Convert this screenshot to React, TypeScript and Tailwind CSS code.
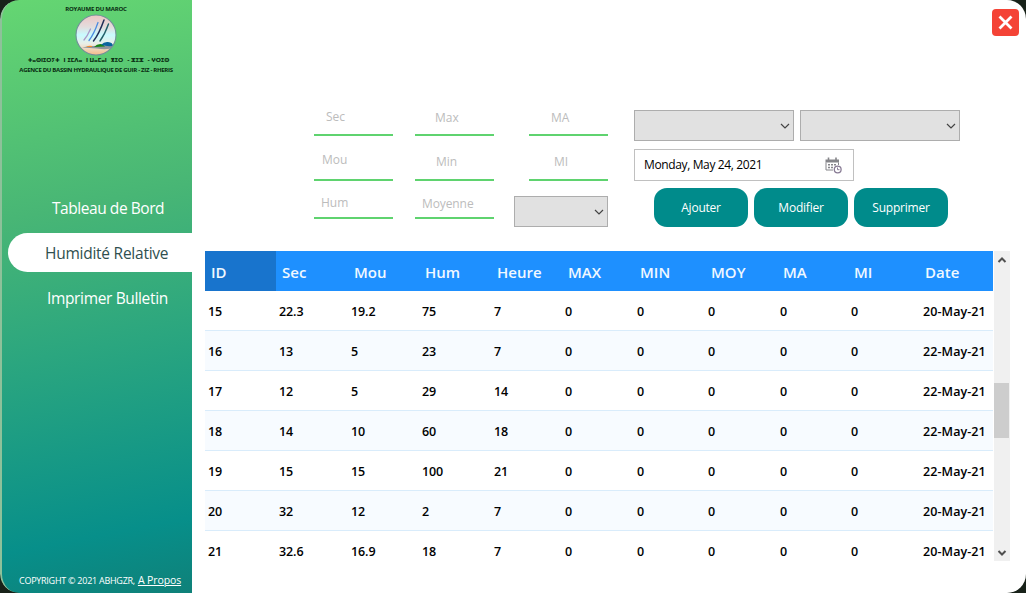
import { ReactNode } from "react";

const columns = ["ID", "Sec", "Mou", "Hum", "Heure", "MAX", "MIN", "MOY", "MA", "MI", "Date"];

const rows = [
  ["15", "22.3", "19.2", "75", "7", "0", "0", "0", "0", "0", "20-May-21"],
  ["16", "13", "5", "23", "7", "0", "0", "0", "0", "0", "22-May-21"],
  ["17", "12", "5", "29", "14", "0", "0", "0", "0", "0", "22-May-21"],
  ["18", "14", "10", "60", "18", "0", "0", "0", "0", "0", "22-May-21"],
  ["19", "15", "15", "100", "21", "0", "0", "0", "0", "0", "22-May-21"],
  ["20", "32", "12", "2", "7", "0", "0", "0", "0", "0", "20-May-21"],
  ["21", "32.6", "16.9", "18", "7", "0", "0", "0", "0", "0", "20-May-21"],
];

const tableGrid = "grid grid-cols-[71px_72px_71px_72px_71px_72px_71px_72px_71px_72px_75px]";

function Logo() {
  return (
    <svg width="42" height="42" viewBox="0 0 42 42" className="block">
      <defs>
        <linearGradient id="sky" x1="0" y1="0" x2="0" y2="1">
          <stop offset="0" stopColor="#edc5c4" />
          <stop offset="0.3" stopColor="#e3dddd" />
          <stop offset="0.5" stopColor="#c9fbff" />
          <stop offset="0.72" stopColor="#e9eee6" />
          <stop offset="1" stopColor="#f6b988" />
        </linearGradient>
        <clipPath id="disc"><circle cx="21" cy="21" r="20" /></clipPath>
      </defs>
      <circle cx="21" cy="21" r="20" fill="url(#sky)" />
      <g clipPath="url(#disc)">
        <path d="M7 33.500 Q14 31.500 20 32 L38 31 L39 33.500 Q32 36.500 22 34.500 Z" fill="#8d949a" />
        <path d="M11 33 Q14 31 17 32 L17 33 Z" fill="#f28d2f" />
        <path d="M19 33 Q23 29 28 30.500 L30 32.500 Z" fill="#148513" />
        <path d="M26 31 Q29 27.500 33 28 Q38 28.500 38 32 Q31 32.500 26 31 Z" fill="#09649d" />
      </g>
      <g fill="none" strokeLinecap="round">
        <path d="M15.500 15 Q12.500 22 9 26" stroke="#a99ac8" strokeWidth="1.3" />
        <path d="M23 8.500 Q19 20 14 26.500" stroke="#4d8be0" strokeWidth="1.3" />
        <path d="M29 6 Q24 20 18.500 27" stroke="#202e57" strokeWidth="1.5" />
        <path d="M33.500 10 Q30 20 25 27" stroke="#23616b" strokeWidth="1.400" />
      </g>
      <circle cx="21" cy="21" r="20" fill="none" stroke="#71909a" strokeWidth="1.1" />
    </svg>
  );
}

function Chevron({ up = false, bold = false }: { up?: boolean; bold?: boolean }) {
  return (
    <svg width="10" height="8" viewBox="0 0 10 8" className="block shrink-0">
      <path
        d={up ? "M1.500 6 L5 2.500 L8.500 6" : bold ? "M1.500 2 L5 5.500 L8.500 2" : "M1 2 L5 6 L9 2"}
        fill="none"
        stroke={bold ? "#505050" : "#444"}
        strokeWidth={bold ? 2 : 1.2}
      />
    </svg>
  );
}

function Field({ box, text, children }: { box: string; text: string; children: ReactNode }) {
  return (
    <div className={`w-[79px] border-b-2 border-[#5fd36f] text-[12px] leading-4 text-[#bcbcbc] ${box}`}>
      <span className={`block whitespace-nowrap ${text}`}>{children}</span>
    </div>
  );
}

function Select({ className }: { className: string }) {
  return (
    <div className={`flex h-[31px] items-center justify-end border border-[#adadad] bg-[#e1e1e1] pr-[3px] ${className}`}>
      <Chevron />
    </div>
  );
}

function CalendarIcon() {
  return (
    <svg width="17" height="17" viewBox="0 0 17 17" className="block" fill="none">
      <path d="M0.500 2.500 H14 V5.500 H0.500 Z" fill="#85858a" />
      <path d="M3.500 0.500 V4 M11 0.500 V4" stroke="#85858a" strokeWidth="1.600" />
      <path d="M1 5.500 V13 H8 M13.500 5.500 V8" stroke="#85858a" />
      <path d="M3 7.800 H12 M3 10.500 H9" stroke="#85858a" strokeWidth="1.400" strokeDasharray="2 1" />
      <circle cx="12.700" cy="12.500" r="3.400" fill="#fff" stroke="#887b94" strokeWidth="1.300" />
      <path d="M12.500 10.500 V12.700 H14.500" stroke="#887b94" />
    </svg>
  );
}

function ActionButton({ children }: { children: ReactNode }) {
  return (
    <button className="h-[39px] w-[94px] rounded-[13px] bg-[#008b8b] text-[12px] tracking-[-0.22px] text-white">{children}</button>
  );
}

function Sidebar() {
  return (
    <aside className="flex w-[192px] shrink-0 flex-col rounded-l-[19px] border-l-2 border-[#8ec19a] bg-[linear-gradient(169deg,#65d672_0%,#48b675_35%,#2ba67f_58%,#078f8a_88%,#0f8179_100%)] text-white">
      <header className="flex h-[76px] flex-col items-center pr-[2px] pt-[4px] text-[#082b10]">
        <div className="h-[10px] text-[6px] font-bold leading-[10px] tracking-[-0.2px]">ROYAUME DU MAROC</div>
        <Logo />
        <div className="mt-[-1px] flex h-[10px] gap-[4px] whitespace-nowrap pl-[5px] font-['DejaVu_Sans'] text-[5.500px] font-bold leading-[10px] tracking-[-0.18px]">
          <span>ⵜⴰⵙⵏⵉⵔⵢⵜ</span>
          <span>ⵏ ⵉⵎⴷⴰ</span>
          <span>ⵏ ⵡⴰⵎⴰⵏ</span>
          <span>ⴳⵉⵔ</span>
          <span>- ⵣⵉⵣ</span>
          <span>- ⵖⵔⵉⵙ</span>
        </div>
        <div className="h-[10px] whitespace-nowrap text-[6px] font-bold leading-[10px] tracking-[-0.3px]">
          AGENCE DU BASSIN HYDRAULIQUE DE GUIR - ZIZ - RHERIS
        </div>
      </header>
      <nav className="mt-[113px] flex flex-col text-[15.500px] leading-[38px]">
        <a className="h-[39px] pl-[50px] tracking-[-0.44px]">Tableau de Bord</a>
        <a className="mb-[7px] mt-[5px] ml-[6px] h-[39px] rounded-l-[20px] bg-white pl-[37px] text-[#2f4f4f] leading-[40px] tracking-[-0.25px]">
          Humidité Relative
        </a>
        <a className="h-[39px] pl-[45px] tracking-[-0.35px]">Imprimer Bulletin</a>
      </nav>
      <footer className="mt-auto flex h-[25px] items-center whitespace-nowrap pl-[17px]">
        <span className="mr-[3px] text-[9px] tracking-[-0.26px]">COPYRIGHT © 2021 ABHGZR,</span>
        <a className="text-[10.500px] tracking-[-0.1px] underline">A Propos</a>
      </footer>
    </aside>
  );
}

function EntryForm() {
  return (
    <section className="flex h-[141px] pl-[122px]">
      <div className="mr-[22px] w-[79px]">
        <Field box="h-[26px]" text="relative -top-px pl-[12px]">Sec</Field>
        <Field box="h-[45px]" text="pt-[16px] pl-[8px]">Mou</Field>
        <Field box="h-[38px]" text="pt-[14px] pl-[7px]">Hum</Field>
      </div>
      <div className="mr-[20px] w-[79px]">
        <Field box="h-[26px]" text="pl-[20px]">Max</Field>
        <Field box="h-[45px]" text="pt-[18px] pl-[21px]">Min</Field>
        <Field box="h-[38px]" text="pt-[15px] pl-[7px] tracking-[-0.1px]">Moyenne</Field>
      </div>
      <div className="mr-[26px] flex w-[94px] flex-col items-end">
        <Field box="h-[26px]" text="pl-[22px]">MA</Field>
        <Field box="h-[45px]" text="pt-[18px] pl-[25px]">MI</Field>
        <Select className="mt-[15px] w-[94px]" />
      </div>
      <div className="w-[326px]">
        <div className="flex gap-[6px]">
          <Select className="w-[160px]" />
          <Select className="w-[160px]" />
        </div>
        <div className="mt-[8px] flex h-[32px] w-[220px] items-center justify-between border border-[#c0c0c0] pl-[9px] pr-[11px] text-[12px] tracking-[-0.37px] text-black">
          Monday, May 24, 2021
          <CalendarIcon />
        </div>
        <div className="ml-[20px] mt-[7px] flex gap-[6px]">
          <ActionButton>Ajouter</ActionButton>
          <ActionButton>Modifier</ActionButton>
          <ActionButton>Supprimer</ActionButton>
        </div>
      </div>
    </section>
  );
}

function DataTable() {
  return (
    <section className="ml-[13px] flex h-[310px] w-[805px] overflow-hidden">
      <div className="w-[788px] shrink-0 overflow-hidden font-semibold">
        <div className={`${tableGrid} h-[40px] bg-[#1e90ff] text-[15px] leading-[42px] text-[#f0f8ff]`}>
          {columns.map((name, i) => (
            <div
              key={name}
              className={i === 0 ? "h-[40px] bg-[#1874cd] pl-[6px]" : i === 10 ? "pl-[5px]" : "pl-[6px]"}
            >
              {name}
            </div>
          ))}
        </div>
        {rows.map((row, r) => (
          <div
            key={row[0]}
            className={`${tableGrid} h-[40px] border-b border-[#d9ecfb] text-[12.500px] leading-[41px] text-black ${r % 2 ? "bg-[#f7fbff]" : "bg-white"}`}
          >
            {row.map((cell, i) => (
              <div key={i} className={i === 10 ? "whitespace-nowrap pl-[3px] tracking-[0.08px]" : "whitespace-nowrap pl-[3px] tracking-[-0.1px]"}>{cell}</div>
            ))}
          </div>
        ))}
      </div>
      <div className="ml-px flex w-[16px] flex-col items-center bg-[#f0f0f0] pb-[4px] pt-[5px]">
        <Chevron up bold />
        <div className="mr-px mt-[119px] h-[55px] w-[15px] bg-[#cdcdcd]" />
        <div className="mt-auto"><Chevron bold /></div>
      </div>
    </section>
  );
}

export default function App() {
  return (
    <div className="h-[593px] w-[1026px] overflow-hidden bg-[#182219] font-['Open_Sans','Noto_Sans',sans-serif]">
      <div className="flex h-full overflow-hidden rounded-[19px]">
        <Sidebar />
        <main className="flex min-w-0 flex-1 flex-col bg-white">
          <div className="flex h-[110px] justify-end pr-[7px] pt-[9px]">
            <button aria-label="Fermer" className="flex h-[27px] w-[27px] items-center justify-center rounded-[4px] bg-[#f44336]">
              <svg width="15" height="15" viewBox="0 0 15 15">
                <path d="M1.500 1.500 L13.500 13.500 M13.500 1.500 L1.500 13.500" stroke="#fff" strokeWidth="2.800" />
              </svg>
            </button>
          </div>
          <EntryForm />
          <DataTable />
        </main>
      </div>
    </div>
  );
}
